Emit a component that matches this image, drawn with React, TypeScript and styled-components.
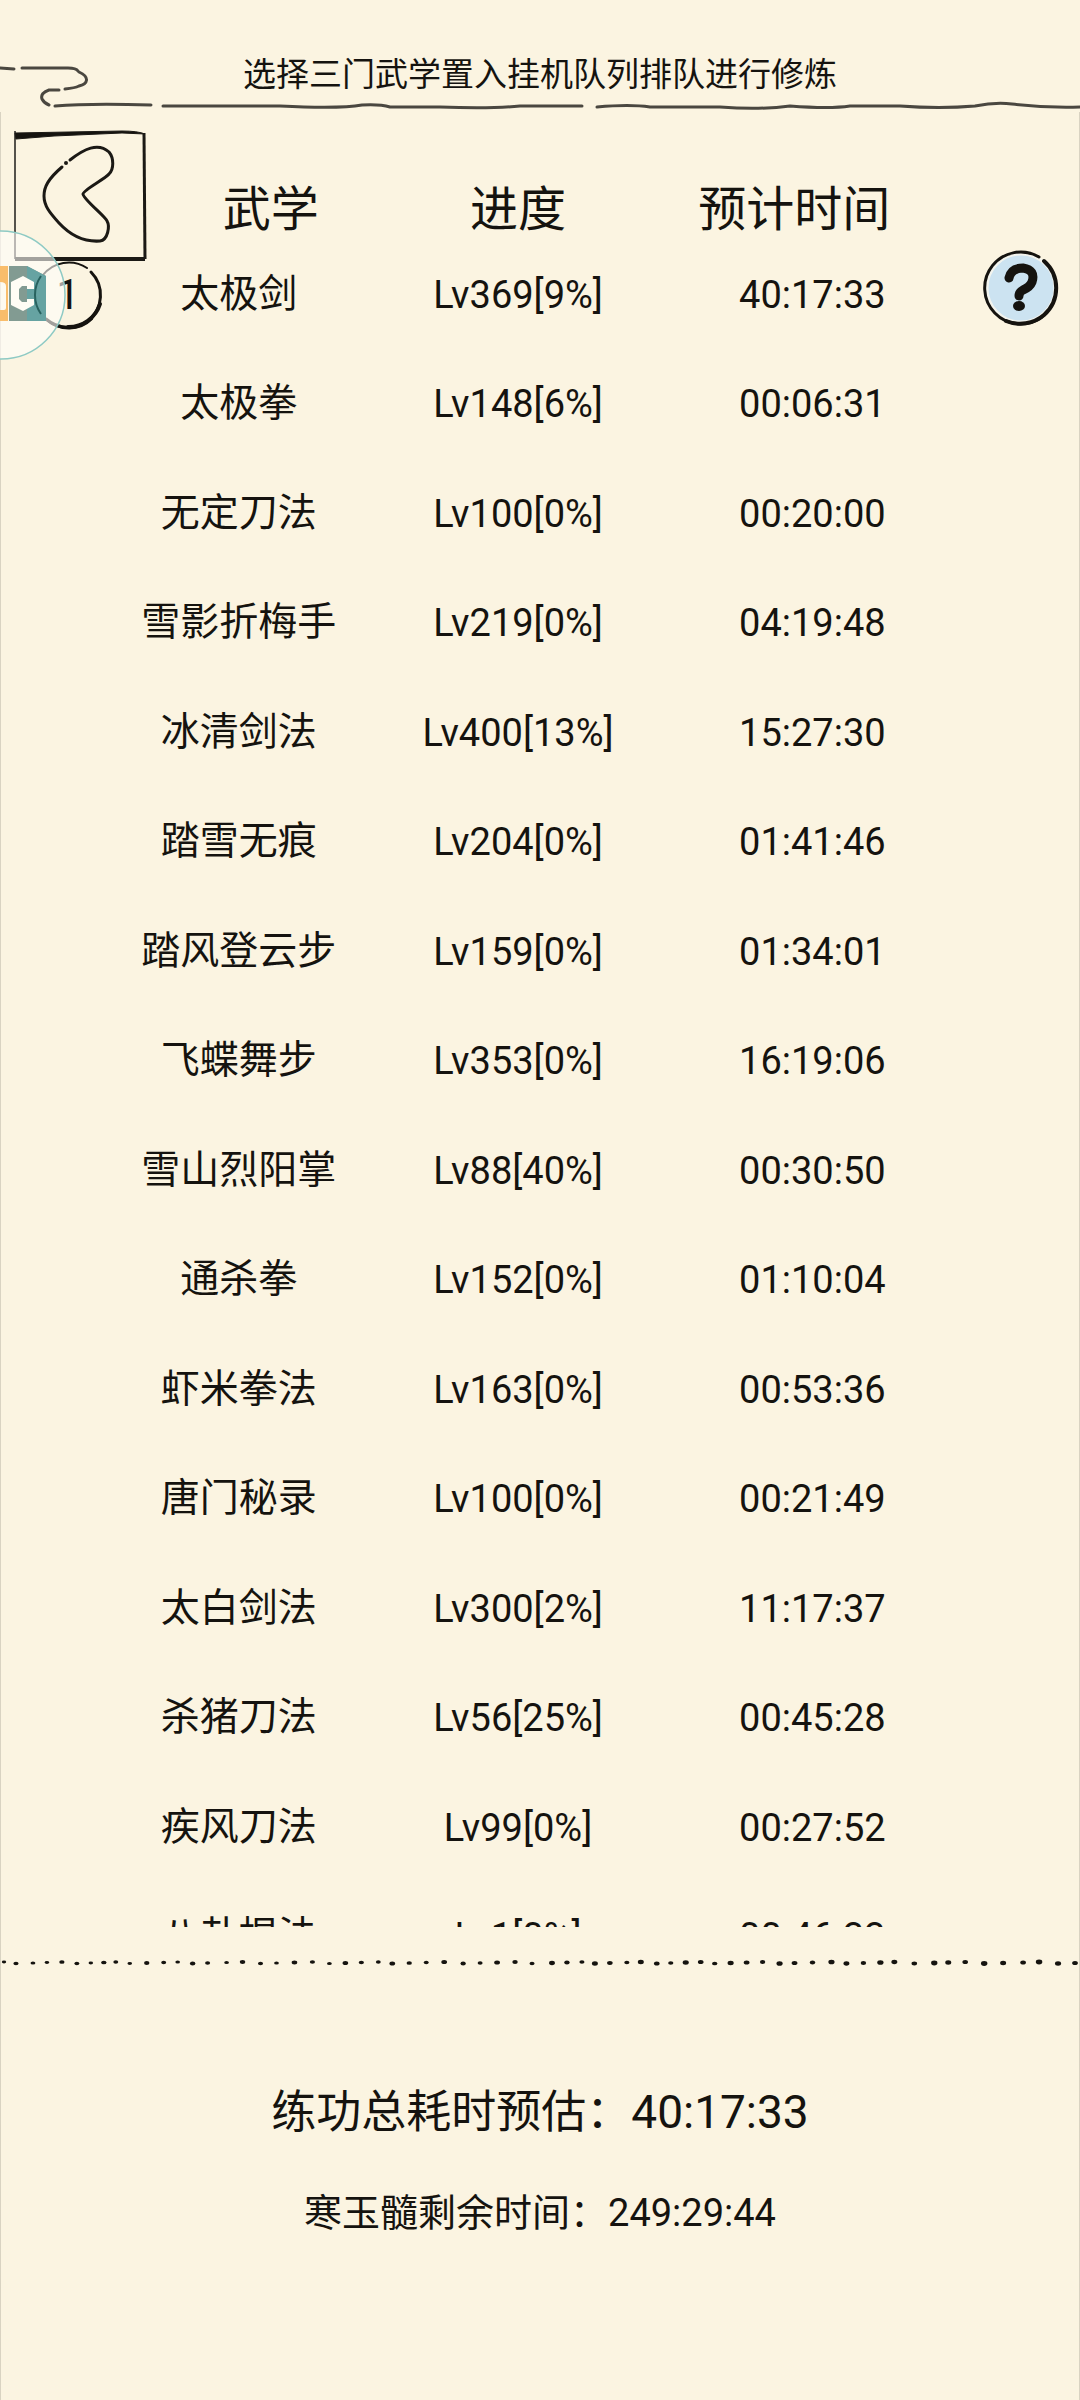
import React from "react";
import styled, { createGlobalStyle } from "styled-components";

const rows = [
  ["太极剑", "Lv369[9%]", "40:17:33"],
  ["太极拳", "Lv148[6%]", "00:06:31"],
  ["无定刀法", "Lv100[0%]", "00:20:00"],
  ["雪影折梅手", "Lv219[0%]", "04:19:48"],
  ["冰清剑法", "Lv400[13%]", "15:27:30"],
  ["踏雪无痕", "Lv204[0%]", "01:41:46"],
  ["踏风登云步", "Lv159[0%]", "01:34:01"],
  ["飞蝶舞步", "Lv353[0%]", "16:19:06"],
  ["雪山烈阳掌", "Lv88[40%]", "00:30:50"],
  ["通杀拳", "Lv152[0%]", "01:10:04"],
  ["虾米拳法", "Lv163[0%]", "00:53:36"],
  ["唐门秘录", "Lv100[0%]", "00:21:49"],
  ["太白剑法", "Lv300[2%]", "11:17:37"],
  ["杀猪刀法", "Lv56[25%]", "00:45:28"],
  ["疾风刀法", "Lv99[0%]", "00:27:52"],
  ["八卦棍法", "Lv1[0%]", "00:46:33"],
];

const GlobalStyle = createGlobalStyle`
  * { box-sizing: border-box; }
  body { margin: 0; background: #fbf4e1; }
`;

const Page = styled.main`
  position: relative;
  display: flex;
  flex-direction: column;
  height: 100vh;
  overflow: hidden;
  background: #fbf4e1;
  color: #15130f;
  font-family: Roboto, "Noto Sans CJK SC", sans-serif;
`;

const TopBar = styled.header`
  position: relative;
  flex: none;
  height: 112px;
  padding-top: 51px;
`;

const Title = styled.h1`
  margin: 0;
  font-size: 33px;
  font-weight: 400;
  line-height: 48px;
  text-align: center;
`;

const TopLine = styled.svg`
  position: absolute;
  left: 0;
  top: 60px;
  width: 100%;
  height: 52px;
`;

const BackButton = styled.button`
  position: absolute;
  left: 12px;
  top: 128px;
  width: 136px;
  height: 136px;
  padding: 0;
  border: 0;
  background: none;
`;

const QueueBadge = styled.button`
  position: absolute;
  left: 32px;
  top: 260px;
  width: 72px;
  height: 70px;
  padding: 0;
  border: 0;
  background: none;
  color: #15130f;
  font: 400 42px/68px Roboto, sans-serif;
`;

const BadgeRing = styled.svg`
  position: absolute;
  inset: 0;
`;

const FloatingBall = styled.svg`
  position: absolute;
  left: 0;
  top: 228px;
  width: 68px;
  height: 134px;
`;

const HelpButton = styled.button`
  position: absolute;
  right: 20px;
  top: 249px;
  width: 78px;
  height: 78px;
  padding: 0;
  border: 0;
  background: none;
`;

const SkillTable = styled.table`
  display: flex;
  flex: 1;
  flex-direction: column;
  min-height: 0;
  border: solid #d9d3c2;
  border-width: 0 1px;
`;

const TableHead = styled.thead`
  display: block;
  flex: none;
  height: 125px;
  padding-top: 63px;
`;

const HeadRow = styled.tr`
  display: grid;
  grid-template-columns: 236fr 260fr 294fr;
  padding: 0 138px 0 152px;
`;

const HeadCell = styled.th`
  padding: 0;
  font-size: 48px;
  font-weight: 400;
  line-height: 70px;
  text-align: center;
  white-space: nowrap;
`;

const TableBody = styled.tbody`
  display: block;
  flex: 1;
  min-height: 0;
  padding-top: 2px;
  overflow-y: auto;
  scrollbar-width: none;
`;

const SkillRow = styled.tr`
  display: grid;
  grid-template-columns: 276fr 284fr 306fr;
  align-items: center;
  height: 109px;
  padding: 0 114px 0 100px;

  &:nth-child(even) { height: 110px; }
`;

const Cell = styled.td<{ $name?: boolean }>`
  padding: ${(p) => (p.$name ? 0 : 2)}px 0 0;
  font-size: ${(p) => (p.$name ? 39 : 38)}px;
  line-height: 56px;
  text-align: center;
  white-space: nowrap;
`;

const Footer = styled.footer`
  flex: none;
  height: 473px;
  border: solid #d9d3c2;
  border-width: 0 1px;
`;

const DottedLine = styled.svg`
  display: block;
  width: 100%;
  height: 70px;
`;

const Summary = styled.p<{ $large?: boolean }>`
  margin: 0;
  padding-top: ${(p) => (p.$large ? 80 : 32)}px;
  font-size: ${(p) => (p.$large ? 45 : 38)}px;
  line-height: ${(p) => (p.$large ? 70 : 66)}px;
  text-align: center;
`;

const Duration = styled.span<{ $large?: boolean }>`
  font-size: ${(p) => (p.$large ? 46 : 38)}px;
`;

// Unevenly spaced ink dots of the hand-drawn divider
const dots = [
  3, 15, 32, 46, 61, 76, 90, 103, 115, 129, 146, 163, 177, 192, 207, 226, 242,
  260, 276, 294, 312, 329, 345, 361, 378, 392, 409, 426, 444, 463, 480, 497,
  515, 532, 552, 567, 582, 595, 610, 627, 641, 657, 671, 686, 701, 715, 731,
  747, 763, 780, 795, 813, 832, 847, 864, 881, 895, 915, 935, 949, 966, 985,
  1004, 1024, 1040, 1059, 1076,
].map((x, i) => ({
  x,
  y: 36 + ((i * 3) % 4) / 2 - 1,
  r: 1.4 + ((i * 5) % 3) * 0.2 + i * 0.01,
}));

export default function App() {
  return (
    <Page>
      <GlobalStyle />
      <TopBar>
        <TopLine viewBox="0 0 1080 52" preserveAspectRatio="none" fill="none" stroke="#4a4740" strokeWidth="3" strokeLinecap="round" aria-hidden="true">
          <path d="M0 8L14 9M22 8H68Q76 8 78 11M79 12C90 17 88 24 79 26Q75 28 65 29M59 30H49Q40 33 42 39Q44 43 49 45M55 46Q90 43 151 45" />
          <path d="M163 46H280Q340 49 362 45Q380 44 390 47H440Q490 49 520 46H582M597 47Q630 44 650 47H720Q760 50 790 46Q830 49 850 46H900Q940 49 975 46Q995 42 1012 44Q1045 48 1080 47" />
        </TopLine>
        <Title>选择三门武学置入挂机队列排队进行修炼</Title>
      </TopBar>
      <SkillTable>
        <TableHead>
          <HeadRow>
            <HeadCell>武学</HeadCell>
            <HeadCell>进度</HeadCell>
            <HeadCell>预计时间</HeadCell>
          </HeadRow>
        </TableHead>
        <TableBody>
          {rows.map(([name, level, time]) => (
            <SkillRow key={name}>
              <Cell $name>{name}</Cell>
              <Cell>{level}</Cell>
              <Cell>{time}</Cell>
            </SkillRow>
          ))}
        </TableBody>
      </SkillTable>
      <Footer>
        <DottedLine viewBox="0 0 1080 70" preserveAspectRatio="none" fill="#15130f" aria-hidden="true">
          {dots.map((d) => (
            <ellipse key={d.x} cx={d.x} cy={d.y} rx={d.r + 0.8} ry={d.r} />
          ))}
        </DottedLine>
        <Summary $large>
          练功总耗时预估：<Duration $large>40:17:33</Duration>
        </Summary>
        <Summary>
          寒玉髓剩余时间：<Duration>249:29:44</Duration>
        </Summary>
      </Footer>
      <BackButton aria-label="返回">
        <svg width="136" height="136" viewBox="0 0 136 136" fill="none" stroke="#1b1915">
          <path d="M3 3V131" strokeWidth="2" stroke="#55524b" />
          <path d="M132 5L133 131" strokeWidth="3" />
          <path d="M3 131H133" strokeWidth="4" />
          <path d="M3 5L110 3Q126 3 133 6L110 5L42 8L4 11Z" fill="#15130f" strokeWidth="1" />
          <path d="M50 39C36 51 32 59 32 68C32 78 38 85 47 95C59 108 74 114 88 113C96 112 98 98 95 93C94 89 71 71 71 66C71 62 93 51 97 46C102 41 102 30 97 24C86 14 72 21 58 32" strokeWidth="3" strokeLinecap="round" />
          <circle cx="54" cy="35" r="2" fill="#1b1915" stroke="none" />
        </svg>
      </BackButton>
      <QueueBadge>
        <BadgeRing width="72" height="70" viewBox="0 0 72 70" fill="none" stroke="#15130f" strokeLinecap="round" aria-hidden="true">
          <path d="M55 8A33 33 0 1 0 60 59" strokeWidth="2" />
          <path d="M59 12A33 33 0 0 1 56 61A34 34 0 0 1 14 59" strokeWidth="3" />
          <path d="M68 44A33 33 0 0 1 36 67" strokeWidth="4" />
        </BadgeRing>
        1
      </QueueBadge>
      <FloatingBall viewBox="0 0 68 134" aria-hidden="true">
        <circle cx="1" cy="67" r="64" fill="#fffefa" fillOpacity=".6" stroke="#8ecac4" strokeWidth="1.5" />
        <path d="M0 38H8V93H0V82H4Q6 82 6 80V58Q6 54 0 54Z" fill="#f9bd6b" />
        <path d="M9 38H27L46 48V93H9Z" fill="#829b92" />
        <path d="M27 38L46 48V93H27Z" fill="#66a3a2" />
        <path d="M23 48L34 54V61H27V58H22L19 61V71L22 74H27V71H34V77L23 83L11 77V54Z" fill="#fffdf5" />
        <path d="M41 48A33 33 0 0 0 41 86" fill="none" stroke="#28625f" strokeWidth="2" />
      </FloatingBall>
      <HelpButton aria-label="帮助">
        <svg width="78" height="78" viewBox="0 0 78 78" fill="none" stroke="#15130f" strokeLinecap="round">
          <circle cx="39" cy="39" r="34" fill="#cce3f1" stroke="#f3f4ee" strokeWidth="3" />
          <path d="M57 8A36 36 0 1 0 60 68" strokeWidth="3" />
          <path d="M62 12A36 36 0 0 1 62 66A37 37 0 0 1 24 72" strokeWidth="4" />
          <path d="M27 29Q29 19 41 19Q54 21 50 33Q48 38 41 41Q37 43 37 47" strokeWidth="9" />
          <ellipse cx="37" cy="57" rx="6" ry="5" fill="#15130f" stroke="none" />
        </svg>
      </HelpButton>
    </Page>
  );
}
